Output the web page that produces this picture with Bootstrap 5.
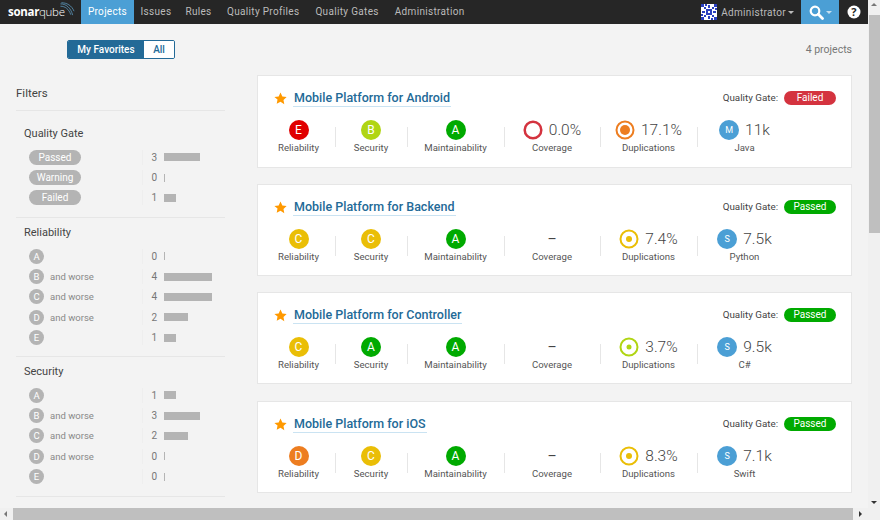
<!DOCTYPE html>
<html lang="en"><head><meta charset="utf-8"><title>SonarQube</title>
<link href="https://cdn.jsdelivr.net/npm/bootstrap@5.3.0/dist/css/bootstrap.min.css" rel="stylesheet">
<style>
html,body{height:100%;overflow:hidden}
body{font-family:Roboto,"Open Sans",sans-serif;font-size:12px;color:#444;background:#f3f3f3}
.shell{height:520px;width:880px}
.top-area{height:508px;min-height:0}
.page{width:868px;min-width:868px;overflow:hidden}
.sq-bar{height:24px;background:#262626;font-size:10px;letter-spacing:.32px}
.sq-logo{width:81px;padding-left:8px;color:#fff;font-family:"Open Sans",sans-serif;font-size:11.5px;letter-spacing:-.3px;line-height:24px;position:relative}
.sq-logo b{font-weight:700}.sq-logo i{font-style:normal;font-weight:300}
.sq-logo svg{position:absolute;left:59px;top:2px}
.sq-link{color:#bbb;text-decoration:none;line-height:24px;padding:0 8px}
.sq-link.on{background:#4b9fd5;color:#fff}
.sq-link.n1{width:53px;padding:0;text-align:center}
.sq-link.n2{width:44px;padding:0;text-align:center}
.sq-link.n3{width:41px;padding:0;text-align:center}
.sq-avatar{margin-right:4px}
.caret{display:inline-block;border:3.5px solid transparent;border-top-color:#bbb;border-bottom:0;margin-left:2px;vertical-align:2px}
.caret.cm{margin-right:7px}
.sq-search{width:38px;height:24px;background:#4b9fd5}
.sq-help{width:29px}
.body-row{height:484px}
.side{width:257px;padding-left:16px;padding-right:32px}
.toggle-row{height:51px;padding:16px 0 0 51px}
.tog{height:19px;border:1px solid #236a97;border-radius:2px;font-size:10px;font-weight:500;overflow:hidden;width:108px}
.tog span{line-height:17px}
.tog .a{background:#236a97;color:#fff;width:76px;text-align:center}
.tog .b{background:#fff;color:#236a97;flex:1;text-align:center}
.filters-h{font-size:11.5px;height:36px;line-height:36px;border-bottom:1px solid #e6e6e6}
.fgroup{border-bottom:1px solid #e6e6e6;padding:0 0 0 8px}
.fgroup h6{font-size:11px;font-weight:400;color:#444;margin:0;line-height:16px}
.fgroup.g1{height:107px;padding-top:15px}
.fgroup.g2{height:139px;padding-top:7px}
.fgroup.g3{height:140px;padding-top:7px}
.frow{height:20.4px;font-size:10px;color:#888}
.fgroup h6+.flist{margin-top:5px}
.fl{width:118px;padding-left:5px}
.fl .and{margin-left:6px;font-size:9.5px}
.pilly{display:inline-block;width:52px;height:15px;line-height:15px;border-radius:8px;background:#b4b4b4;color:#fff;text-align:center;font-size:10px}
.dot{display:inline-block;width:15px;height:15px;line-height:15px;border-radius:50%;background:#b4b4b4;color:#fff;text-align:center;font-size:9.500px}
.fnum{text-align:right;border-left:1px solid #eee;margin-right:7px;flex:none;width:15px;color:#777}
.fbar{height:8px;background:#b4b4b4;min-width:1px}
.main{width:595px}
.count{height:51px;padding-top:19px;text-align:right;font-size:10.5px;color:#777;line-height:14px}
.pcard{background:#fff;border:1px solid #e6e6e6;height:92px;margin-bottom:16px;padding:0 15px 0 16px}
.count+.pcard{height:93px}
.pcard:nth-of-type(4){margin-bottom:17px}
.phead{height:42px;padding-top:2px}
.star{margin-right:6px;flex:none}
.pname{color:#236a97;font-size:12.500px;font-weight:500;text-decoration:none;border-bottom:1px solid #cae3f2;line-height:17px;padding:0 1px}
.qg{font-size:9.8px;color:#444}
.qbadge{width:52px;height:14px;line-height:14px;border-radius:7px;color:#fff;text-align:center;font-size:10px;margin-left:6px;font-weight:400}
.qf{background:#d4333f}.qp{background:#00aa00}
.mrow{margin-left:-12px;margin-top:2px}
.mc{height:40px;text-align:center;position:relative;flex:none}
.mc+.mc::before{content:"";position:absolute;left:0;top:7px;height:20px;width:1px;background:#e6e6e6}
.w1{width:73px}.w2{width:72px}.w3{width:97px}.w4{width:96px}.w5{width:97px}.w6{width:95px}
.mtop{height:20px;gap:6px}
.mlab{font-size:9.6px;color:#555;line-height:14px;margin-top:1px}
.rate{display:inline-block;width:20px;height:20px;line-height:20px;border-radius:50%;color:#fff;text-align:center;font-size:12px}
.ra{background:#00aa00}.rb{background:#b0d513}.rc{background:#eabe06}.rd{background:#ed7d20}.re{background:#e00000}
.val{font-size:15.5px;color:#444;line-height:20px;font-weight:300}
.sz{display:inline-block;width:20px;height:20px;line-height:20px;border-radius:50%;background:#4b9fd5;color:#fff;text-align:center;font-size:9px}
.dash{font-size:14px;line-height:20px;color:#444}
.vbar{width:12px;background:#f0f0f0;position:relative}
.vthumb{height:218px;margin:15px 0 0 1px;background:#bfbfbf;width:11px}
.hbar{height:12px;background:#f0f0f0;padding-left:13px}
.hthumb{height:12px;width:840px;background:#bfbfbf}
.arr{position:absolute;left:3px;width:0;height:0;border:3px solid transparent}
.au{top:3px;border-bottom-color:#777;border-top:0}
.ad{bottom:4px;border-top-color:#333;border-bottom:0}
.hl{position:absolute;left:4px;bottom:3px;border:3px solid transparent;border-right-color:#777;border-left:0}
.hr2{position:absolute;left:859px;bottom:3px;border:3px solid transparent;border-left-color:#333;border-right:0}
</style></head>
<body>
<div class="shell d-flex flex-column position-relative">
 <div class="top-area d-flex">
  <div class="page">
   <nav class="sq-bar d-flex align-items-stretch">
    <div class="sq-logo"><b>sonar</b><i>qube</i><svg width="16" height="15" viewBox="0 0 16 16" fill="none" stroke="#5f9fc6" stroke-width=".8"><path d="M1 2c6 0 11 4 13 12"/><path d="M1 4.500c5 0 9 3 11 9"/><path d="M2 .8c6 0 11 3 13.500 9"/></svg></div>
    <a class="sq-link on n1" href="#">Projects</a><a class="sq-link n2" href="#">Issues</a><a class="sq-link n3" href="#">Rules</a><a class="sq-link" href="#">Quality Profiles</a><a class="sq-link" href="#">Quality Gates</a><a class="sq-link" href="#">Administration</a>
    <div class="ms-auto d-flex align-items-center">
     <svg class="sq-avatar" width="16" height="16" viewBox="0 0 16 16" shape-rendering="crispEdges"><rect width="16" height="16" fill="#fff"/><g fill="#2a3fbf"><rect x="0" y="0" width="3" height="3"/><rect x="13" y="0" width="3" height="3"/><rect x="0" y="13" width="3" height="3"/><rect x="13" y="13" width="3" height="3"/><rect x="5" y="5" width="6" height="6"/><rect x="3" y="3" width="2" height="2"/><rect x="11" y="3" width="2" height="2"/><rect x="3" y="11" width="2" height="2"/><rect x="11" y="11" width="2" height="2"/><rect x="7" y="1" width="2" height="3"/><rect x="7" y="12" width="2" height="3"/><rect x="1" y="7" width="3" height="2"/><rect x="12" y="7" width="3" height="2"/><rect x="4" y="0" width="2" height="2"/><rect x="10" y="14" width="2" height="2"/><rect x="0" y="10" width="2" height="2"/><rect x="14" y="4" width="2" height="2"/></g><rect x="7" y="7" width="2" height="2" fill="#fff"/></svg>
     <span style="color:#bbb">Administrator</span><span class="caret cm"></span>
     <div class="sq-search d-flex align-items-center justify-content-center ms-0"><svg width="15" height="15" viewBox="0 0 15 15" fill="none" stroke="#fff" stroke-width="2.200"><circle cx="6" cy="6" r="4.300"/><path d="M9.300 9.300L13.500 13.500" stroke-linecap="round" stroke-width="2.800"/></svg><span class="caret" style="border-top-color:#c5dff0;margin-left:2px;vertical-align:0"></span></div>
     <div class="sq-help d-flex align-items-center justify-content-center"><svg width="14" height="14" viewBox="0 0 14 14"><circle cx="7" cy="7" r="6.500" fill="#fff"/><text x="7" y="10.800" font-size="11" font-weight="700" font-family="Open Sans" text-anchor="middle" fill="#262626">?</text></svg></div>
    </div>
   </nav>
   <div class="body-row d-flex">
    <aside class="side">
     <div class="toggle-row"><div class="tog d-flex"><span class="a">My Favorites</span><span class="b">All</span></div></div>
     <div class="filters-h">Filters</div>
     <div class="fgroup g1"><h6>Quality Gate</h6><div class="flist">
      <div class="frow d-flex align-items-center"><div class="fl"><span class="pilly">Passed</span></div><span class="fnum">3</span><div class="fbar" style="width:36px"></div></div>
      <div class="frow d-flex align-items-center"><div class="fl"><span class="pilly">Warning</span></div><span class="fnum">0</span><div class="fbar" style="width:1px"></div></div>
      <div class="frow d-flex align-items-center"><div class="fl"><span class="pilly">Failed</span></div><span class="fnum">1</span><div class="fbar" style="width:12px"></div></div>
     </div></div>
     <div class="fgroup g2"><h6>Reliability</h6><div class="flist">
      <div class="frow d-flex align-items-center"><div class="fl"><span class="dot">A</span></div><span class="fnum">0</span><div class="fbar" style="width:1px"></div></div>
      <div class="frow d-flex align-items-center"><div class="fl"><span class="dot">B</span><span class="and">and worse</span></div><span class="fnum">4</span><div class="fbar" style="width:48px"></div></div>
      <div class="frow d-flex align-items-center"><div class="fl"><span class="dot">C</span><span class="and">and worse</span></div><span class="fnum">4</span><div class="fbar" style="width:48px"></div></div>
      <div class="frow d-flex align-items-center"><div class="fl"><span class="dot">D</span><span class="and">and worse</span></div><span class="fnum">2</span><div class="fbar" style="width:24px"></div></div>
      <div class="frow d-flex align-items-center"><div class="fl"><span class="dot">E</span></div><span class="fnum">1</span><div class="fbar" style="width:12px"></div></div>
     </div></div>
     <div class="fgroup g3"><h6>Security</h6><div class="flist">
      <div class="frow d-flex align-items-center"><div class="fl"><span class="dot">A</span></div><span class="fnum">1</span><div class="fbar" style="width:12px"></div></div>
      <div class="frow d-flex align-items-center"><div class="fl"><span class="dot">B</span><span class="and">and worse</span></div><span class="fnum">3</span><div class="fbar" style="width:36px"></div></div>
      <div class="frow d-flex align-items-center"><div class="fl"><span class="dot">C</span><span class="and">and worse</span></div><span class="fnum">2</span><div class="fbar" style="width:24px"></div></div>
      <div class="frow d-flex align-items-center"><div class="fl"><span class="dot">D</span><span class="and">and worse</span></div><span class="fnum">0</span><div class="fbar" style="width:1px"></div></div>
      <div class="frow d-flex align-items-center"><div class="fl"><span class="dot">E</span></div><span class="fnum">0</span><div class="fbar" style="width:1px"></div></div>
     </div></div>
    </aside>
    <main class="main">
     <div class="count">4 projects</div>
     <div class="pcard">
      <div class="phead d-flex align-items-center"><svg class="star" width="13" height="13" viewBox="0 0 24 24"><path fill="#f90" d="M12 1l3.400 7.300 7.900 1-5.800 5.500 1.500 7.900L12 17.800l-7 3.900 1.500-7.900L.7 9.300l7.900-1z"/></svg><a class="pname" href="#">Mobile Platform for Android</a><div class="ms-auto d-flex align-items-center qg">Quality Gate:<span class="qbadge qf">Failed</span></div></div>
      <div class="mrow d-flex">
       <div class="mc w1"><div class="mtop d-flex justify-content-center align-items-center"><span class="rate re">E</span></div><div class="mlab">Reliability</div></div>
       <div class="mc w2"><div class="mtop d-flex justify-content-center align-items-center"><span class="rate rb">B</span></div><div class="mlab">Security</div></div>
       <div class="mc w3"><div class="mtop d-flex justify-content-center align-items-center"><span class="rate ra">A</span></div><div class="mlab">Maintainability</div></div>
       <div class="mc w4"><div class="mtop d-flex justify-content-center align-items-center"><svg width="20" height="20" viewBox="0 0 20 20"><circle cx="10" cy="10" r="8.300" fill="none" stroke="#d4333f" stroke-width="2.500"/></svg><span class="val">0.0%</span></div><div class="mlab">Coverage</div></div>
       <div class="mc w5"><div class="mtop d-flex justify-content-center align-items-center"><svg width="20" height="20" viewBox="0 0 20 20"><circle cx="10" cy="10" r="8.500" fill="none" stroke="#ed7d20" stroke-width="2"/><circle cx="10" cy="10" r="5" fill="#ed7d20"/></svg><span class="val">17.1%</span></div><div class="mlab">Duplications</div></div>
       <div class="mc w6"><div class="mtop d-flex justify-content-center align-items-center"><span class="sz">M</span><span class="val">11k</span></div><div class="mlab">Java</div></div>
      </div>
     </div>
     <div class="pcard">
      <div class="phead d-flex align-items-center"><svg class="star" width="13" height="13" viewBox="0 0 24 24"><path fill="#f90" d="M12 1l3.400 7.300 7.900 1-5.800 5.500 1.500 7.900L12 17.800l-7 3.900 1.500-7.900L.7 9.300l7.900-1z"/></svg><a class="pname" href="#">Mobile Platform for Backend</a><div class="ms-auto d-flex align-items-center qg">Quality Gate:<span class="qbadge qp">Passed</span></div></div>
      <div class="mrow d-flex">
       <div class="mc w1"><div class="mtop d-flex justify-content-center align-items-center"><span class="rate rc">C</span></div><div class="mlab">Reliability</div></div>
       <div class="mc w2"><div class="mtop d-flex justify-content-center align-items-center"><span class="rate rc">C</span></div><div class="mlab">Security</div></div>
       <div class="mc w3"><div class="mtop d-flex justify-content-center align-items-center"><span class="rate ra">A</span></div><div class="mlab">Maintainability</div></div>
       <div class="mc w4"><div class="mtop d-flex justify-content-center align-items-center"><span class="dash">–</span></div><div class="mlab">Coverage</div></div>
       <div class="mc w5"><div class="mtop d-flex justify-content-center align-items-center"><svg width="20" height="20" viewBox="0 0 20 20"><circle cx="10" cy="10" r="8.500" fill="none" stroke="#eabe06" stroke-width="2"/><circle cx="10" cy="10" r="3" fill="#eabe06"/></svg><span class="val">7.4%</span></div><div class="mlab">Duplications</div></div>
       <div class="mc w6"><div class="mtop d-flex justify-content-center align-items-center"><span class="sz">S</span><span class="val">7.5k</span></div><div class="mlab">Python</div></div>
      </div>
     </div>
     <div class="pcard">
      <div class="phead d-flex align-items-center"><svg class="star" width="13" height="13" viewBox="0 0 24 24"><path fill="#f90" d="M12 1l3.400 7.300 7.900 1-5.800 5.500 1.500 7.900L12 17.800l-7 3.900 1.500-7.900L.7 9.300l7.900-1z"/></svg><a class="pname" href="#">Mobile Platform for Controller</a><div class="ms-auto d-flex align-items-center qg">Quality Gate:<span class="qbadge qp">Passed</span></div></div>
      <div class="mrow d-flex">
       <div class="mc w1"><div class="mtop d-flex justify-content-center align-items-center"><span class="rate rc">C</span></div><div class="mlab">Reliability</div></div>
       <div class="mc w2"><div class="mtop d-flex justify-content-center align-items-center"><span class="rate ra">A</span></div><div class="mlab">Security</div></div>
       <div class="mc w3"><div class="mtop d-flex justify-content-center align-items-center"><span class="rate ra">A</span></div><div class="mlab">Maintainability</div></div>
       <div class="mc w4"><div class="mtop d-flex justify-content-center align-items-center"><span class="dash">–</span></div><div class="mlab">Coverage</div></div>
       <div class="mc w5"><div class="mtop d-flex justify-content-center align-items-center"><svg width="20" height="20" viewBox="0 0 20 20"><circle cx="10" cy="10" r="8.500" fill="none" stroke="#b0d513" stroke-width="2"/><circle cx="10" cy="10" r="2.500" fill="#b0d513"/></svg><span class="val">3.7%</span></div><div class="mlab">Duplications</div></div>
       <div class="mc w6"><div class="mtop d-flex justify-content-center align-items-center"><span class="sz">S</span><span class="val">9.5k</span></div><div class="mlab">C#</div></div>
      </div>
     </div>
     <div class="pcard">
      <div class="phead d-flex align-items-center"><svg class="star" width="13" height="13" viewBox="0 0 24 24"><path fill="#f90" d="M12 1l3.400 7.300 7.900 1-5.800 5.500 1.500 7.900L12 17.800l-7 3.900 1.500-7.900L.7 9.300l7.900-1z"/></svg><a class="pname" href="#">Mobile Platform for iOS</a><div class="ms-auto d-flex align-items-center qg">Quality Gate:<span class="qbadge qp">Passed</span></div></div>
      <div class="mrow d-flex">
       <div class="mc w1"><div class="mtop d-flex justify-content-center align-items-center"><span class="rate rd">D</span></div><div class="mlab">Reliability</div></div>
       <div class="mc w2"><div class="mtop d-flex justify-content-center align-items-center"><span class="rate rc">C</span></div><div class="mlab">Security</div></div>
       <div class="mc w3"><div class="mtop d-flex justify-content-center align-items-center"><span class="rate ra">A</span></div><div class="mlab">Maintainability</div></div>
       <div class="mc w4"><div class="mtop d-flex justify-content-center align-items-center"><span class="dash">–</span></div><div class="mlab">Coverage</div></div>
       <div class="mc w5"><div class="mtop d-flex justify-content-center align-items-center"><svg width="20" height="20" viewBox="0 0 20 20"><circle cx="10" cy="10" r="8.500" fill="none" stroke="#eabe06" stroke-width="2"/><circle cx="10" cy="10" r="3" fill="#eabe06"/></svg><span class="val">8.3%</span></div><div class="mlab">Duplications</div></div>
       <div class="mc w6"><div class="mtop d-flex justify-content-center align-items-center"><span class="sz">S</span><span class="val">7.1k</span></div><div class="mlab">Swift</div></div>
      </div>
     </div>
    </main>
   </div>
  </div>
  <div class="vbar"><span class="arr au"></span><div class="vthumb"></div><span class="arr ad"></span></div>
 </div>
 <div class="hbar position-relative"><span class="hl"></span><div class="hthumb"></div><span class="hr2"></span></div>
</div>
<script src="https://cdn.jsdelivr.net/npm/bootstrap@5.3.0/dist/js/bootstrap.bundle.min.js"></script>
</body></html>
